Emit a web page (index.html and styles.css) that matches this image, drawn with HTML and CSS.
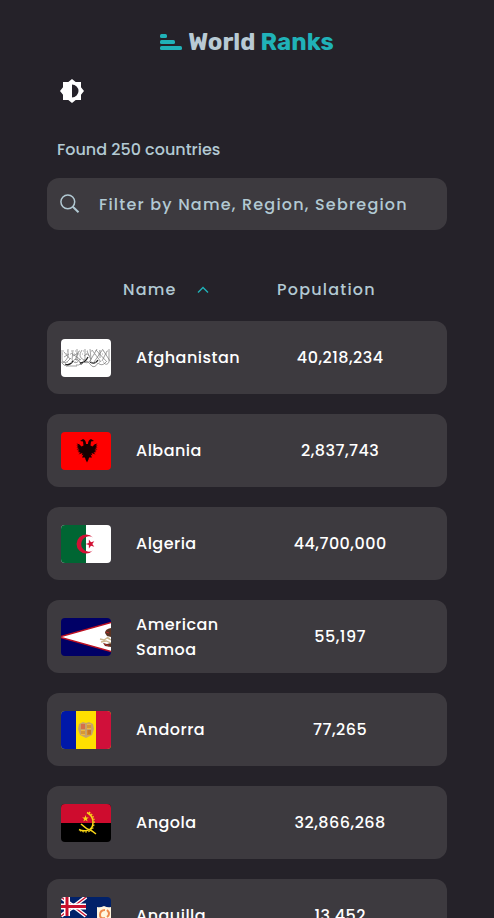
FILE: index.html
```html
<!DOCTYPE html>
<html lang="en">
<head>
<meta charset="utf-8">
<meta name="viewport" content="width=device-width, initial-scale=1">
<title>World Ranks</title>
<link rel="stylesheet" href="styles.css">
</head>
<body>
<div class="page">
  <header class="header">
    <a class="logo" href="#">
      <svg class="logo-mark" viewBox="0 0 22 16" aria-hidden="true">
        <rect width="7" height="4" rx="1.5"/>
        <rect y="6" width="15" height="4" rx="1.5"/>
        <rect y="12" width="22" height="4" rx="1.5"/>
      </svg>
      <span>World <span class="logo-accent">Ranks</span></span>
    </a>
    <button class="theme" type="button" aria-label="Toggle theme">
      <svg viewBox="0 0 24 24" aria-hidden="true"><path fill-rule="evenodd" d="M21 8.300V3h-5.300L12 0 8.300 3H3v5.300L0 12l3 3.700V21h5.300L12 24l3.700-3H21v-5.300L24 12zM12 18.500v-13a6.500 6.500 0 0 1 0 13z"/></svg>
    </button>
  </header>
  <main>
    <p class="found">Found 250 countries</p>
    <label class="search">
      <svg viewBox="0 0 20 20" aria-hidden="true"><circle cx="7.800" cy="7.800" r="6.900"/><path class="handle" d="M12.800 12.800 18.500 18.300"/></svg>
      <input type="search" aria-label="Filter countries" placeholder="Filter by Name, Region, Sebregion">
    </label>
    <table class="countries">
      <thead>
        <tr>
          <th scope="col"><button type="button">Name
            <svg viewBox="0 0 12 8" aria-hidden="true"><path d="M1 6.500 6 1.500l5 5"/></svg></button></th>
          <th scope="col"><button type="button">Population</button></th>
        </tr>
      </thead>
      <tbody>
        <tr>
          <td class="flag"><svg viewBox="0 0 50 38" role="img" aria-label="Flag of Afghanistan">
            <rect width="50" height="38" fill="#fff"/>
            <g fill="none" stroke="#777" stroke-width=".7">
              <path d="M1 11v9q0 5 5 3l4-4M3 13l6 7M7 10v8q-4 7-7 5M12 11l-1 10q4 6 8-1M10 14l10 7M16 10v12M18 12l-4 9M21 11q-5 7 2 10M24 10v10q-4 7-9 6M26 12l4 9q-4 5-8 1M29 10l1 10M31 11l9 12M36 10l-7 12M35 11l11 12M42 10l-9 13M42 11l7 11M48 10v13q-2 4-5 1M46 12l-5 10M39 11v8"/>
              <path d="M1 24q4 6 10-1t9 3q5-7 9-1t8-1q4 4 8-1M5 27h11M23 17q4-4 5 0M3 18l5-3M12 17l5-3"/>
            </g>
            <path d="M4 25q5 2 8-3M19 24q5 0 8-6M29 23q5 3 8-2" fill="none" stroke="#222" stroke-width="1.300"/>
            <path d="M2 12h46M1 15h48M2 23h44" stroke="#aaa" stroke-width="1" stroke-dasharray="1 3"/>
          </svg></td>
          <td class="name">Afghanistan</td><td class="population">40,218,234</td>
        </tr>
        <tr>
          <td class="flag"><svg viewBox="0 0 50 38" role="img" aria-label="Flag of Albania">
            <rect width="50" height="38" fill="#f00"/>
            <path fill="#160000" d="M25 12q0-4-3-5l-3 2 3 .5.5 4-2 1q-2-3-5-3l2 2h-2l2 2h-2l3 2h-3l3 1.500-2 1 3 .5-2 2 4-1.500-1 2.500 2-1-1.500 3h3l.5 2 1.500 3 1.500-3 .5-2h3l-1.500-3 2 1-1-2.500 4 1.500-2-2 3-.5-2-1 3-1.500h-3l3-2h-2l2-2h-2l2-2q-3 0-5 3l-2-1 .5-4 3-.5-3-2q-3 1-3 5z"/>
          </svg></td>
          <td class="name">Albania</td><td class="population">2,837,743</td>
        </tr>
        <tr>
          <td class="flag"><svg viewBox="0 0 50 38" role="img" aria-label="Flag of Algeria">
            <rect width="50" height="38" fill="#fff"/><rect width="25" height="38" fill="#063"/>
            <path fill="#d21034" d="M32 12.500A9.500 9.500 0 1 0 32 25.500 7.700 7.700 0 1 1 32 12.500zM24.500 19l3.300-1.100.1-3.500 2.100 2.800 3.300-1-2 2.800 2 2.800-3.300-1-2.100 2.800-.1-3.500z"/>
          </svg></td>
          <td class="name">Algeria</td><td class="population">44,700,000</td>
        </tr>
        <tr>
          <td class="flag"><svg viewBox="0 0 50 38" role="img" aria-label="Flag of American Samoa">
            <rect width="50" height="38" fill="#000066"/>
            <path fill="#fff" stroke="#bd1021" stroke-width="1.500" d="M-2 19 52 4v30z"/>
            <path fill="#5a3524" d="M50 10q-6 1-6 5l2 3 4 1zM42 25l4 1 4-1v4l-6-1z"/>
            <path d="M39 21l4 1 3-2 4 2M40 24l5-1 5 2M46 19l3 2" fill="none" stroke="#cdb98f" stroke-width="1.300"/>
            <path d="M45 14l3 1M43 26l5 2" stroke="#b22a2a"/>
          </svg></td>
          <td class="name">American Samoa</td><td class="population">55,197</td>
        </tr>
        <tr>
          <td class="flag"><svg viewBox="0 0 50 38" role="img" aria-label="Flag of Andorra">
            <rect width="50" height="38" fill="#fedf00"/><rect width="15" height="38" fill="#0018a8"/><rect x="35" width="15" height="38" fill="#d0103a"/>
            <path fill="#c7a36b" d="M18 13l4-2 3 1 3-1 4 2 1 5-2 6-6 3-6-3-2-6z"/>
            <path fill="#d6704a" d="M20 13h4v5h-4z"/><path fill="#eeb93c" d="M26 13h4v5h-4zM20 19h4v5h-4z"/><path fill="#d88928" d="M26 19h4v5h-4z"/>
            <path d="M27 14v3M29 14v3M21 20v3M23 20v3M27 20h3M27 22h3" stroke="#a75a30" stroke-width=".7"/>
          </svg></td>
          <td class="name">Andorra</td><td class="population">77,265</td>
        </tr>
        <tr>
          <td class="flag"><svg viewBox="0 0 50 38" role="img" aria-label="Flag of Angola">
            <rect width="50" height="38"/><rect width="50" height="19" fill="#ce0c2e"/>
            <path fill="none" stroke="#f9d616" stroke-width="1.500" d="M26 8.500q6 3 6 10t-6 8q-4 1-8-1"/>
            <path fill="none" stroke="#f9d616" stroke-width="1.200" stroke-dasharray="1.500 1.300" d="M28 8q6 4 5 12t-8 8q-4 0-7-2"/>
            <path fill="none" stroke="#f9d616" stroke-width="1.500" d="M20 20q5 5 11 7l4 3"/>
            <path fill="#f9d616" d="m24.500 11 .8 2.400h2.600l-2.100 1.500.8 2.500-2.100-1.500-2.100 1.500.8-2.500-2.100-1.500h2.600z"/>
          </svg></td>
          <td class="name">Angola</td><td class="population">32,866,268</td>
        </tr>
        <tr>
          <td class="flag"><svg viewBox="0 0 50 38" role="img" aria-label="Flag of Anguilla">
            <rect width="50" height="38" fill="#012169"/>
            <path d="M0 0 25 19M25 0 0 19" stroke="#fff" stroke-width="4"/><path d="M0 0 25 19M25 0 0 19" stroke="#c8102e" stroke-width="1.300"/>
            <path d="M6 0v19M0 9.500h25" stroke="#fff" stroke-width="6"/><path d="M6 0v19M0 9.500h25" stroke="#c8102e" stroke-width="3"/>
            <path d="M36 10q3 1 7-1 4 2 7 1v13q-2 4-7 6-5-2-7-6z" fill="#fff6df"/><path d="M36 22h14q-2 5-7 7-5-2-7-7z" fill="#8ac7d3"/>
            <path d="M39 18q0-5 5-5M46 13q4 4 0 7M44 21q-5 1-5-3" fill="none" stroke="#ef8a4c" stroke-width="2"/>
          </svg></td>
          <td class="name">Anguilla</td><td class="population">13,452</td>
        </tr>
      </tbody>
    </table>
  </main>
</div>
</body>
</html>
```
FILE: styles.css
```css
* { box-sizing: border-box; }

body {
  margin: 0;
  background: #252229;
  color: #fff;
  font: 500 16px/25px Poppins, Inter, sans-serif;
}

.page {
  height: 100vh;
  padding: 0 47px 20px;
  overflow-y: auto;
  scrollbar-width: none;
}

button, input {
  padding: 0;
  border: 0;
  background: none;
  color: inherit;
  font: inherit;
  letter-spacing: inherit;
}

button { cursor: pointer; }

svg { display: block; }

.header { padding-top: 28px; }

.logo {
  display: flex;
  align-items: center;
  justify-content: center;
  gap: 6px;
  color: #b8cad4;
  font: 700 24px/28px Rubik, Inter, sans-serif;
  text-decoration: none;
}

.logo-mark { width: 22px; height: 16px; fill: #20b2b8; }

.logo-accent { color: #20b2b8; }

.theme { display: block; margin: 23px 0 0 13px; }

.theme svg { width: 24px; height: 24px; fill: #fff; }

.found {
  margin: 34px 10px 16px;
  color: #b2c9d3;
}

.search {
  display: flex;
  align-items: center;
  gap: 19px;
  height: 52px;
  padding: 0 13px;
  border-radius: 12px;
  background: #3d3a3f;
  color: #b2c9d3;
  letter-spacing: 0.075em;
}

.search svg {
  flex: none;
  width: 20px;
  height: 20px;
  fill: none;
  stroke: #b2c9d3;
  stroke-width: 1.5;
}

.search .handle { stroke-width: 2; }

.search input {
  flex: 1;
  min-width: 0;
  outline: 0;
  appearance: none;
}

.search input::placeholder { color: inherit; opacity: 1; }

.countries { display: block; margin-top: 47px; }

.countries thead, .countries tbody { display: block; }

.countries thead tr {
  display: grid;
  grid-template-columns: 154fr 170fr;
  padding-left: 76px;
}

.countries th {
  padding: 0;
  color: #b2c9d3;
  font-weight: 500;
  letter-spacing: 0.075em;
  text-align: left;
}

.countries th button { display: flex; align-items: center; gap: 20px; }

.countries th svg {
  width: 12px;
  height: 8px;
  fill: none;
  stroke: #20b2b8;
  stroke-width: 1.4;
}

.countries tbody { padding-top: 19px; }

.countries tbody tr {
  display: grid;
  grid-template-columns: 75px 3fr 5fr;
  align-items: center;
  min-height: 73px;
  margin-bottom: 20px;
  padding: 11px 14px;
  border-radius: 12px;
  background: #3d3a3f;
}

.countries td { padding: 0; letter-spacing: 0.03em; }

.flag svg { width: 50px; height: 38px; border-radius: 4px; }

.countries .population { text-align: center; }
```
